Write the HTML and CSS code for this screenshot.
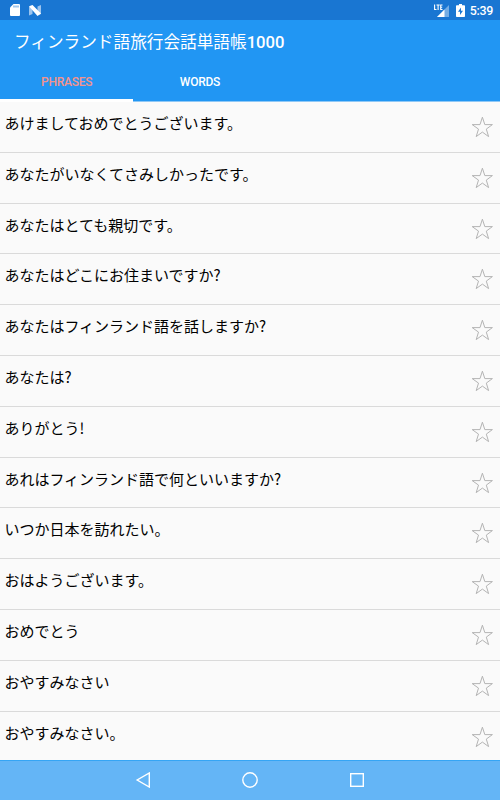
FILE: index.html
```html
<!DOCTYPE html>
<html lang="ja">
<head>
  <meta charset="UTF-8" />
  <meta name="viewport" content="width=device-width, initial-scale=1.0"/>
  <title>フィンランド語旅行会話単語帳1000</title>
  <link rel="stylesheet" href="styles.css">
</head>
<body>
  <svg class="symbols">
    <symbol id="star" viewBox="0 0 22 22">
      <path fill="none" stroke="#b4b4b4" stroke-width="1" d="M11.4 1.2 L13.8 8.6 H21.4 L15.3 13.1 L17.6 20.6 L11.4 16.1 L5.2 20.6 L7.5 13.1 L1.2 8.6 H9 Z"/>
    </symbol>
  </svg>

  <div class="status-bar">
    <svg class="sd-icon" viewBox="0 0 10 12">
      <path fill="#fff" d="M3.5 0 H9 Q10 0 10 1 V11 Q10 12 9 12 H1 Q0 12 0 11 V3.5 Z"/>
      <path stroke="#1976d2" stroke-width="0.8" d="M4 1.5 V3.5 M6 1.5 V3.5 M8 1.5 V3.5"/>
    </svg>
    <svg class="n-icon" viewBox="0 0 12 11">
      <path fill="#9cc4ee" d="M0 2 L3.5 0.5 V9 L0 10.5 Z M8.5 1.5 L12 0 V9 L8.5 10.5 Z"/>
      <path fill="#fff" d="M0 1.2 L3.5 0 L12 8.5 L8.5 11 Z"/>
    </svg>
    <div class="status-right">
      <svg class="signal-icon" viewBox="0 0 16 13">
        <path fill="#75ade4" d="M15 1 V13 H3 Z"/>
        <path fill="#fff" d="M10.5 5.5 V13 H3 Z"/>
        <path fill="none" stroke="#fff" stroke-width="1.1" d="M0.6 0.5 V5.5 H2.5 M2.5 1 H5.7 M4.1 1 V6 M8.5 1 H6.7 V5.5 H8.5 M6.7 3.2 H8.2"/>
      </svg>
      <svg class="battery-icon" viewBox="0 0 9 13">
        <path fill="#fff" d="M3 0 H6 V1.3 H8.2 Q9 1.3 9 2.1 V12.2 Q9 13 8.2 13 H0.8 Q0 13 0 12.2 V2.1 Q0 1.3 0.8 1.3 H3 Z"/>
        <path fill="#1976d2" d="M5 3.5 L2 7.7 H4 V11 L7 6.7 H5 Z"/>
      </svg>
      <span class="clock">5:39</span>
    </div>
  </div>

  <div class="toolbar">
    <h1>フィンランド語旅行会話単語帳<span class="count">1000</span></h1>
  </div>

  <div class="tabs">
    <div class="tab active">PHRASES</div>
    <div class="tab">WORDS</div>
  </div>

  <ul class="phrases">
    <li><span>あけましておめでとうございます。</span><svg class="star"><use href="#star"/></svg></li>
    <li><span>あなたがいなくてさみしかったです。</span><svg class="star"><use href="#star"/></svg></li>
    <li><span>あなたはとても親切です。</span><svg class="star"><use href="#star"/></svg></li>
    <li><span>あなたはどこにお住まいですか?</span><svg class="star"><use href="#star"/></svg></li>
    <li><span>あなたはフィンランド語を話しますか?</span><svg class="star"><use href="#star"/></svg></li>
    <li><span>あなたは?</span><svg class="star"><use href="#star"/></svg></li>
    <li><span>ありがとう!</span><svg class="star"><use href="#star"/></svg></li>
    <li><span>あれはフィンランド語で何といいますか?</span><svg class="star"><use href="#star"/></svg></li>
    <li><span>いつか日本を訪れたい。</span><svg class="star"><use href="#star"/></svg></li>
    <li><span>おはようございます。</span><svg class="star"><use href="#star"/></svg></li>
    <li><span>おめでとう</span><svg class="star"><use href="#star"/></svg></li>
    <li><span>おやすみなさい</span><svg class="star"><use href="#star"/></svg></li>
    <li><span>おやすみなさい。</span><svg class="star"><use href="#star"/></svg></li>
  </ul>

  <div class="nav-bar">
    <svg class="nav-icon" viewBox="0 0 16 16">
      <path fill="none" stroke="#fff" stroke-width="1.4" d="M14.3 1 V15 L2.2 8 Z"/>
    </svg>
    <svg class="nav-icon" viewBox="0 0 16 16">
      <circle cx="8" cy="8" r="7.2" fill="none" stroke="#fff" stroke-width="1.4"/>
    </svg>
    <svg class="nav-icon" viewBox="0 0 16 16">
      <rect x="1.7" y="1.7" width="12.6" height="12.6" fill="none" stroke="#fff" stroke-width="1.4"/>
    </svg>
  </div>
</body>
</html>
```
FILE: styles.css
```css
* {
  box-sizing: border-box;
}

body {
  margin: 0;
  height: 100vh;
  display: flex;
  flex-direction: column;
  overflow: hidden;
  background: #fafafa;
  color: #000;
  font-family: Roboto, "Noto Sans CJK JP", sans-serif;
}

.symbols {
  display: none;
}

.status-bar {
  flex: none;
  display: flex;
  align-items: center;
  height: 20px;
  padding: 0 7px 0 10px;
  background: #1976d2;
  color: #fff;
}

.sd-icon {
  width: 10px;
  height: 12px;
}

.n-icon {
  width: 12px;
  height: 11px;
  margin-left: 9px;
}

.status-right {
  display: flex;
  align-items: center;
  margin-left: auto;
}

.signal-icon {
  width: 16px;
  height: 13px;
}

.battery-icon {
  width: 9px;
  height: 13px;
  margin: 0 5px 0 6px;
}

.clock {
  font-size: 12.4px;
  font-weight: 500;
  letter-spacing: -0.3px;
  line-height: 20px;
  padding-top: 1px;
}

.toolbar {
  flex: none;
  display: flex;
  align-items: center;
  height: 43px;
  padding: 2px 14px 0;
  background: #2196f3;
}

.toolbar h1 {
  margin: 0;
  color: #fff;
  font-size: 16.65px;
  font-weight: 400;
  line-height: 24px;
  white-space: nowrap;
}

.toolbar .count {
  font-weight: 500;
}

.tabs {
  flex: none;
  display: flex;
  height: 39px;
  background: #2196f3;
  border-bottom: 1px solid #8fc8f6;
}

.tab {
  width: 133.3px;
  height: 39px;
  padding-top: 1px;
  color: #fff;
  font-size: 12px;
  font-weight: 500;
  letter-spacing: -0.25px;
  line-height: 37px;
  text-align: center;
}

.tab.active {
  color: #f4938c;
  border-bottom: 3px solid #fff;
}

.phrases {
  flex: 1;
  min-height: 0;
  margin: 0;
  padding: 0;
  overflow: hidden;
  list-style: none;
}

.phrases li {
  display: flex;
  justify-content: space-between;
  height: 50.8px;
  padding: 0 7px 0 4.4px;
  border-bottom: 1px solid #dadada;
  font-family: "Noto Sans CJK JP", sans-serif;
  font-size: 15px;
  line-height: 42px;
}

.star {
  width: 22px;
  height: 22px;
  margin-top: 14px;
}

.nav-bar {
  flex: none;
  display: flex;
  justify-content: center;
  align-items: center;
  gap: 91px;
  height: 40px;
  background: #64b5f6;
  box-shadow: inset 0 1px #35a5f5;
}

.nav-icon {
  width: 16px;
  height: 16px;
}
```
